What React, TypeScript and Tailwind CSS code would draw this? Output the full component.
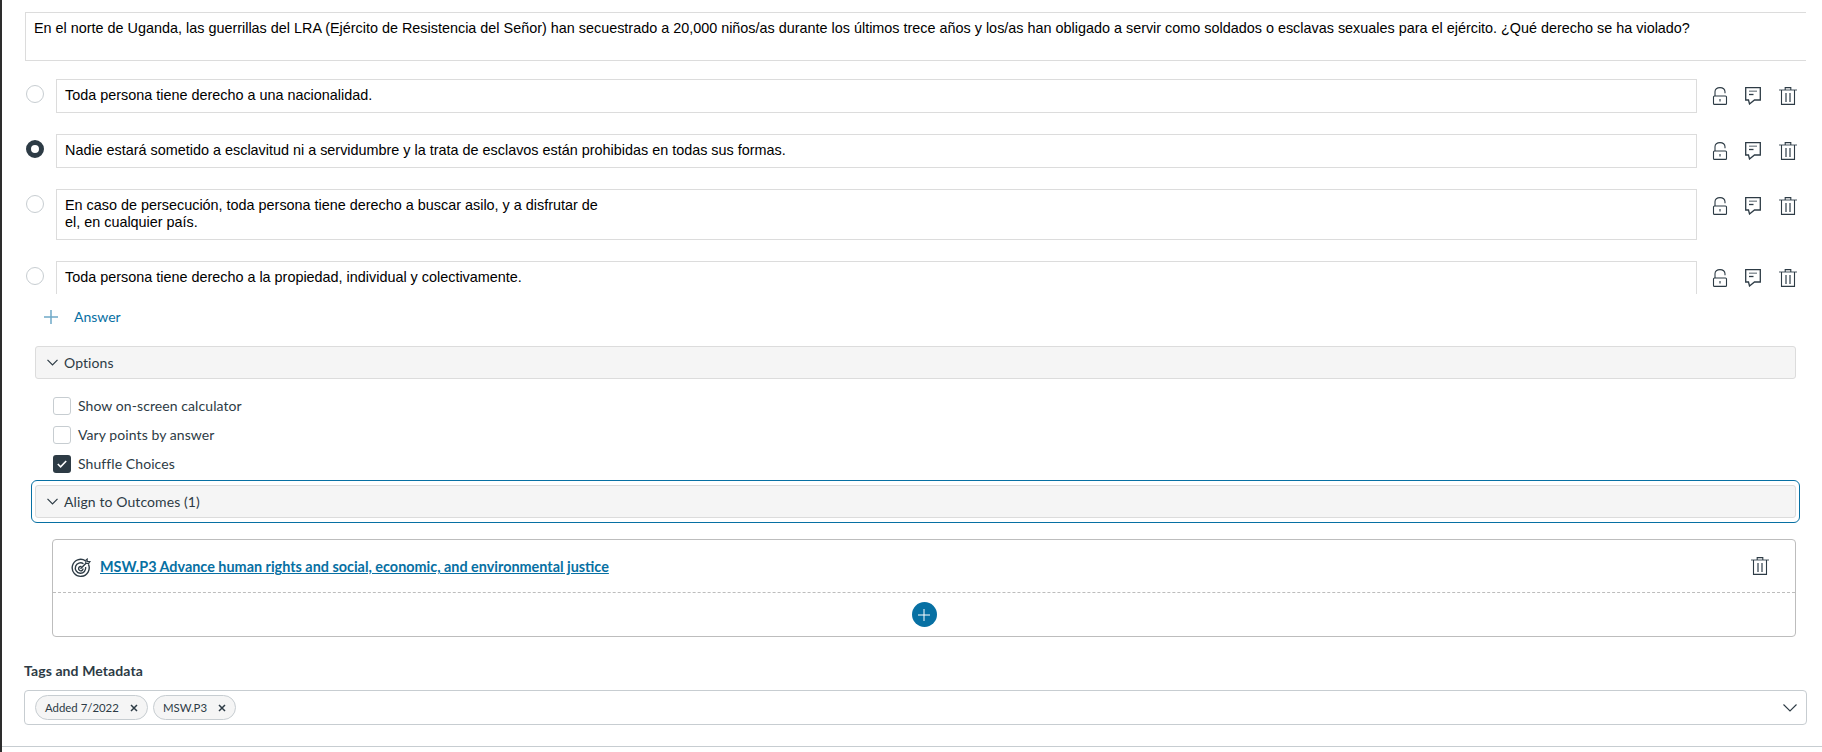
import React from 'react';

const sans = "font-['Liberation_Sans',Arial,sans-serif]";

const LockIcon = () => (
  <svg width="18" height="18" viewBox="0 0 18 18" fill="none" stroke="#2d3b45" strokeWidth="1.1">
    <path d="M4 9V4.800C4 2.300 5.900.6 9 .6s5 1.700 5 4.200V6.200" />
    <rect x="2.500" y="9" width="13" height="8.400" rx="1" />
    <path d="M9 12v2.400" strokeWidth="1.800" stroke="#7b858c" />
  </svg>
);

const CommentIcon = () => (
  <svg width="18" height="18" viewBox="0 0 18 18" fill="none" stroke="#2d3b45" strokeWidth="1.3">
    <path d="M.7.7h14.600v12.300H9.500l-5 4-1-4H.7z" />
    <path d="M4 4.200h8" stroke="#7b858c" />
    <path d="M4 7.500h4.500" />
  </svg>
);

const TrashIcon = () => (
  <svg width="18" height="18" viewBox="0 0 18 18" fill="none" stroke="#2d3b45" strokeWidth="1.100">
    <path d="M0 3h18" stroke="#5a666f" />
    <path d="M6.200 3V.6h5.600V3" />
    <path d="M2.500 3v14.400h13V3" />
    <path d="M7 6v9M11 6v9" strokeWidth="1.500" stroke="#5a666f" />
  </svg>
);

const Chevron = () => (
  <svg width="11" height="7" viewBox="0 0 11 7" fill="none" stroke="#2d3b45" strokeWidth="1.200">
    <path d="M.5.8 5.500 5.800 10.500.8" />
  </svg>
);

const TargetIcon = () => (
  <svg className="mt-[3px]" width="20" height="20" viewBox="0 0 20 20" fill="none" stroke="#2d3b45" strokeWidth="1.400">
    <path d="M14.500 2.800A8.500 8.500 0 1 0 17.400 6.200" />
    <path d="M12.500 5.800A5.200 5.200 0 1 0 14.600 9" />
    <path d="M10.600 8.600A2.200 2.200 0 1 0 12 10.500" />
    <path d="M9.500 10.800 17 3.300" />
    <path d="M14.800 5.500V2.200L16.200 1V3.600H19L17.700 5.500z" fill="#fff" strokeWidth="1.100" />
  </svg>
);

const answers = [
  { text: 'Toda persona tiene derecho a una nacionalidad.', checked: false },
  { text: 'Nadie estará sometido a esclavitud ni a servidumbre y la trata de esclavos están prohibidas en todas sus formas.', checked: true },
  { text: 'En caso de persecución, toda persona tiene derecho a buscar asilo, y a disfrutar de\nel, en cualquier país.', checked: false },
  { text: 'Toda persona tiene derecho a la propiedad, individual y colectivamente.', checked: false },
];

const AnswerRow = ({ text, checked }: { text: string; checked: boolean }) => (
  <div className="flex items-start pl-6 mb-[21px]">
    <div
      className={
        checked
          ? 'w-[18px] h-[18px] mt-[6px] rounded-full border-[5px] border-[#2d3b45] bg-white'
          : 'w-[18px] h-[18px] mt-[6px] rounded-full border border-[#c7cdd1] bg-white'
      }
    />
    <div className={`${sans} w-[1641px] ml-3 border border-[#dcdcdc] px-[8px] pt-[7px] pb-[8px] text-[14.4px] leading-[17px] text-black whitespace-pre-line`}>
      {text}
    </div>
    <div className="flex gap-4 ml-[14px] mt-[8px]">
      <LockIcon />
      <CommentIcon />
      <TrashIcon />
    </div>
  </div>
);

const Check = ({ label, checked }: { label: string; checked?: boolean }) => (
  <div className="flex items-center h-[18px] mb-[11px] ml-[51px] text-[14px] text-[#2d3b45]">
    <div
      className={
        checked
          ? 'w-[18px] h-[18px] rounded-[3px] bg-[#2d3b45] flex items-center justify-center'
          : 'w-[18px] h-[18px] rounded-[3px] border border-[#c7cdd1] bg-white'
      }
    >
      {checked && (
        <svg width="10" height="8" viewBox="0 0 10 8" fill="none" stroke="#fff" strokeWidth="1.600">
          <path d="M.8 4 3.600 6.800 9.200 1" />
        </svg>
      )}
    </div>
    <span className="ml-[7px] pb-[2px] tracking-[0.08px]">{label}</span>
  </div>
);

const Chip = ({ label, width }: { label: string; width: string }) => (
  <div className={`${width} h-[25px] rounded-full border border-[#c7cdd1] bg-[#f5f5f5] flex items-center justify-between pl-[9px] pr-[9px] text-[11.4px] text-[#2d3b45]`}>
    <span>{label}</span>
    <svg width="8" height="8" viewBox="0 0 8 8" stroke="#2d3b45" strokeWidth="1.500">
      <path d="M1 1l6 6M7 1 1 7" />
    </svg>
  </div>
);

export default function App() {
  return (
    <div className="h-[752px] w-[1822px] overflow-hidden bg-white border-l-2 border-[#2d2d2d] font-['Lato',sans-serif] pt-3">
      <div className={`${sans} ml-[23px] w-[1781px] h-[49px] border border-[#dcdcdc] border-r-0 px-2 py-[6px] text-[14.4px] leading-[18px] text-black`}>
        En el norte de Uganda, las guerrillas del LRA (Ejército de Resistencia del Señor) han secuestrado a 20,000 niños/as durante los últimos trece años y los/as han obligado a servir como soldados o esclavas sexuales para el ejército. ¿Qué derecho se ha violado?
      </div>

      <div className="mt-[18px] h-[215px] overflow-hidden">
        {answers.map((a) => (
          <AnswerRow key={a.text} text={a.text} checked={a.checked} />
        ))}
      </div>

      <div className="flex items-center h-[20px] mt-[13px] ml-[42px] text-[14px] text-[#0770a3]">
        <svg width="14" height="14" viewBox="0 0 14 14" stroke="#6fa9c8" strokeWidth="1.500">
          <path d="M7 0v14M0 7h14" />
        </svg>
        <span className="ml-4 pb-[2px]">Answer</span>
      </div>

      <div className="mt-[19px] ml-[33px] w-[1761px] h-[33px] rounded-[3px] border border-[#dcdcdc] bg-[#f5f5f5] flex items-center pl-[11px] text-[14px] text-[#2d3b45]">
        <Chevron />
        <span className="ml-[6px] tracking-[0.08px]">Options</span>
      </div>

      <div className="mt-[18px]">
        <Check label="Show on-screen calculator" />
        <Check label="Vary points by answer" />
        <Check label="Shuffle Choices" checked />
      </div>

      <div className="-mt-1 ml-[29px] w-[1769px] h-[43px] rounded-[6px] border border-[#0770a3] p-1">
        <div className="h-[33px] rounded-[3px] border border-[#dcdcdc] bg-[#f5f5f5] flex items-center pl-[11px] text-[14px] text-[#2d3b45] -mx-px">
          <Chevron />
          <span className="ml-[6px] tracking-[0.1px]">Align to Outcomes (1)</span>
        </div>
      </div>

      <div className="mt-4 ml-[50px] w-[1744px] h-[98px] rounded-[4px] border border-[#bdbdbd]">
        <div className="h-[53px] border-b border-dashed border-[#bdbdbd] flex items-center pl-[18px] pr-[26px]">
          <TargetIcon />
          <a className="ml-[9px] mt-[2px] text-[14.4px] font-bold text-[#0770a3] underline">
            MSW.P3 Advance human rights and social, economic, and environmental justice
          </a>
          <div className="ml-auto">
            <TrashIcon />
          </div>
        </div>
        <div className="h-[43px] flex items-center justify-center">
          <div className="w-[25px] h-[25px] rounded-full bg-[#0770a3] flex items-center justify-center">
            <svg width="12" height="12" viewBox="0 0 12 12" stroke="#fff" strokeWidth="1">
              <path d="M6 0v12M0 6h12" />
            </svg>
          </div>
        </div>
      </div>

      <div className="mt-[24px] ml-[22px] h-[20px] flex items-center pb-[2px] text-[14px] font-bold tracking-[0.1px] text-[#2d3b45]">Tags and Metadata</div>

      <div className="mt-[9px] ml-[22px] w-[1783px] h-[35px] rounded-[4px] border border-[#c7cdd1] flex items-center pl-[10px] pr-[9px] gap-[5px]">
        <Chip label="Added 7/2022" width="w-[113px]" />
        <Chip label="MSW.P3" width="w-[83px]" />
        <svg className="ml-auto" width="14" height="8" viewBox="0 0 14 8" fill="none" stroke="#2d3b45" strokeWidth="1.100">
          <path d="M.5.5 7 7 13.500.5" />
        </svg>
      </div>

      <div className="mt-[21px] border-t border-[#c7cdd1]" />
    </div>
  );
}
